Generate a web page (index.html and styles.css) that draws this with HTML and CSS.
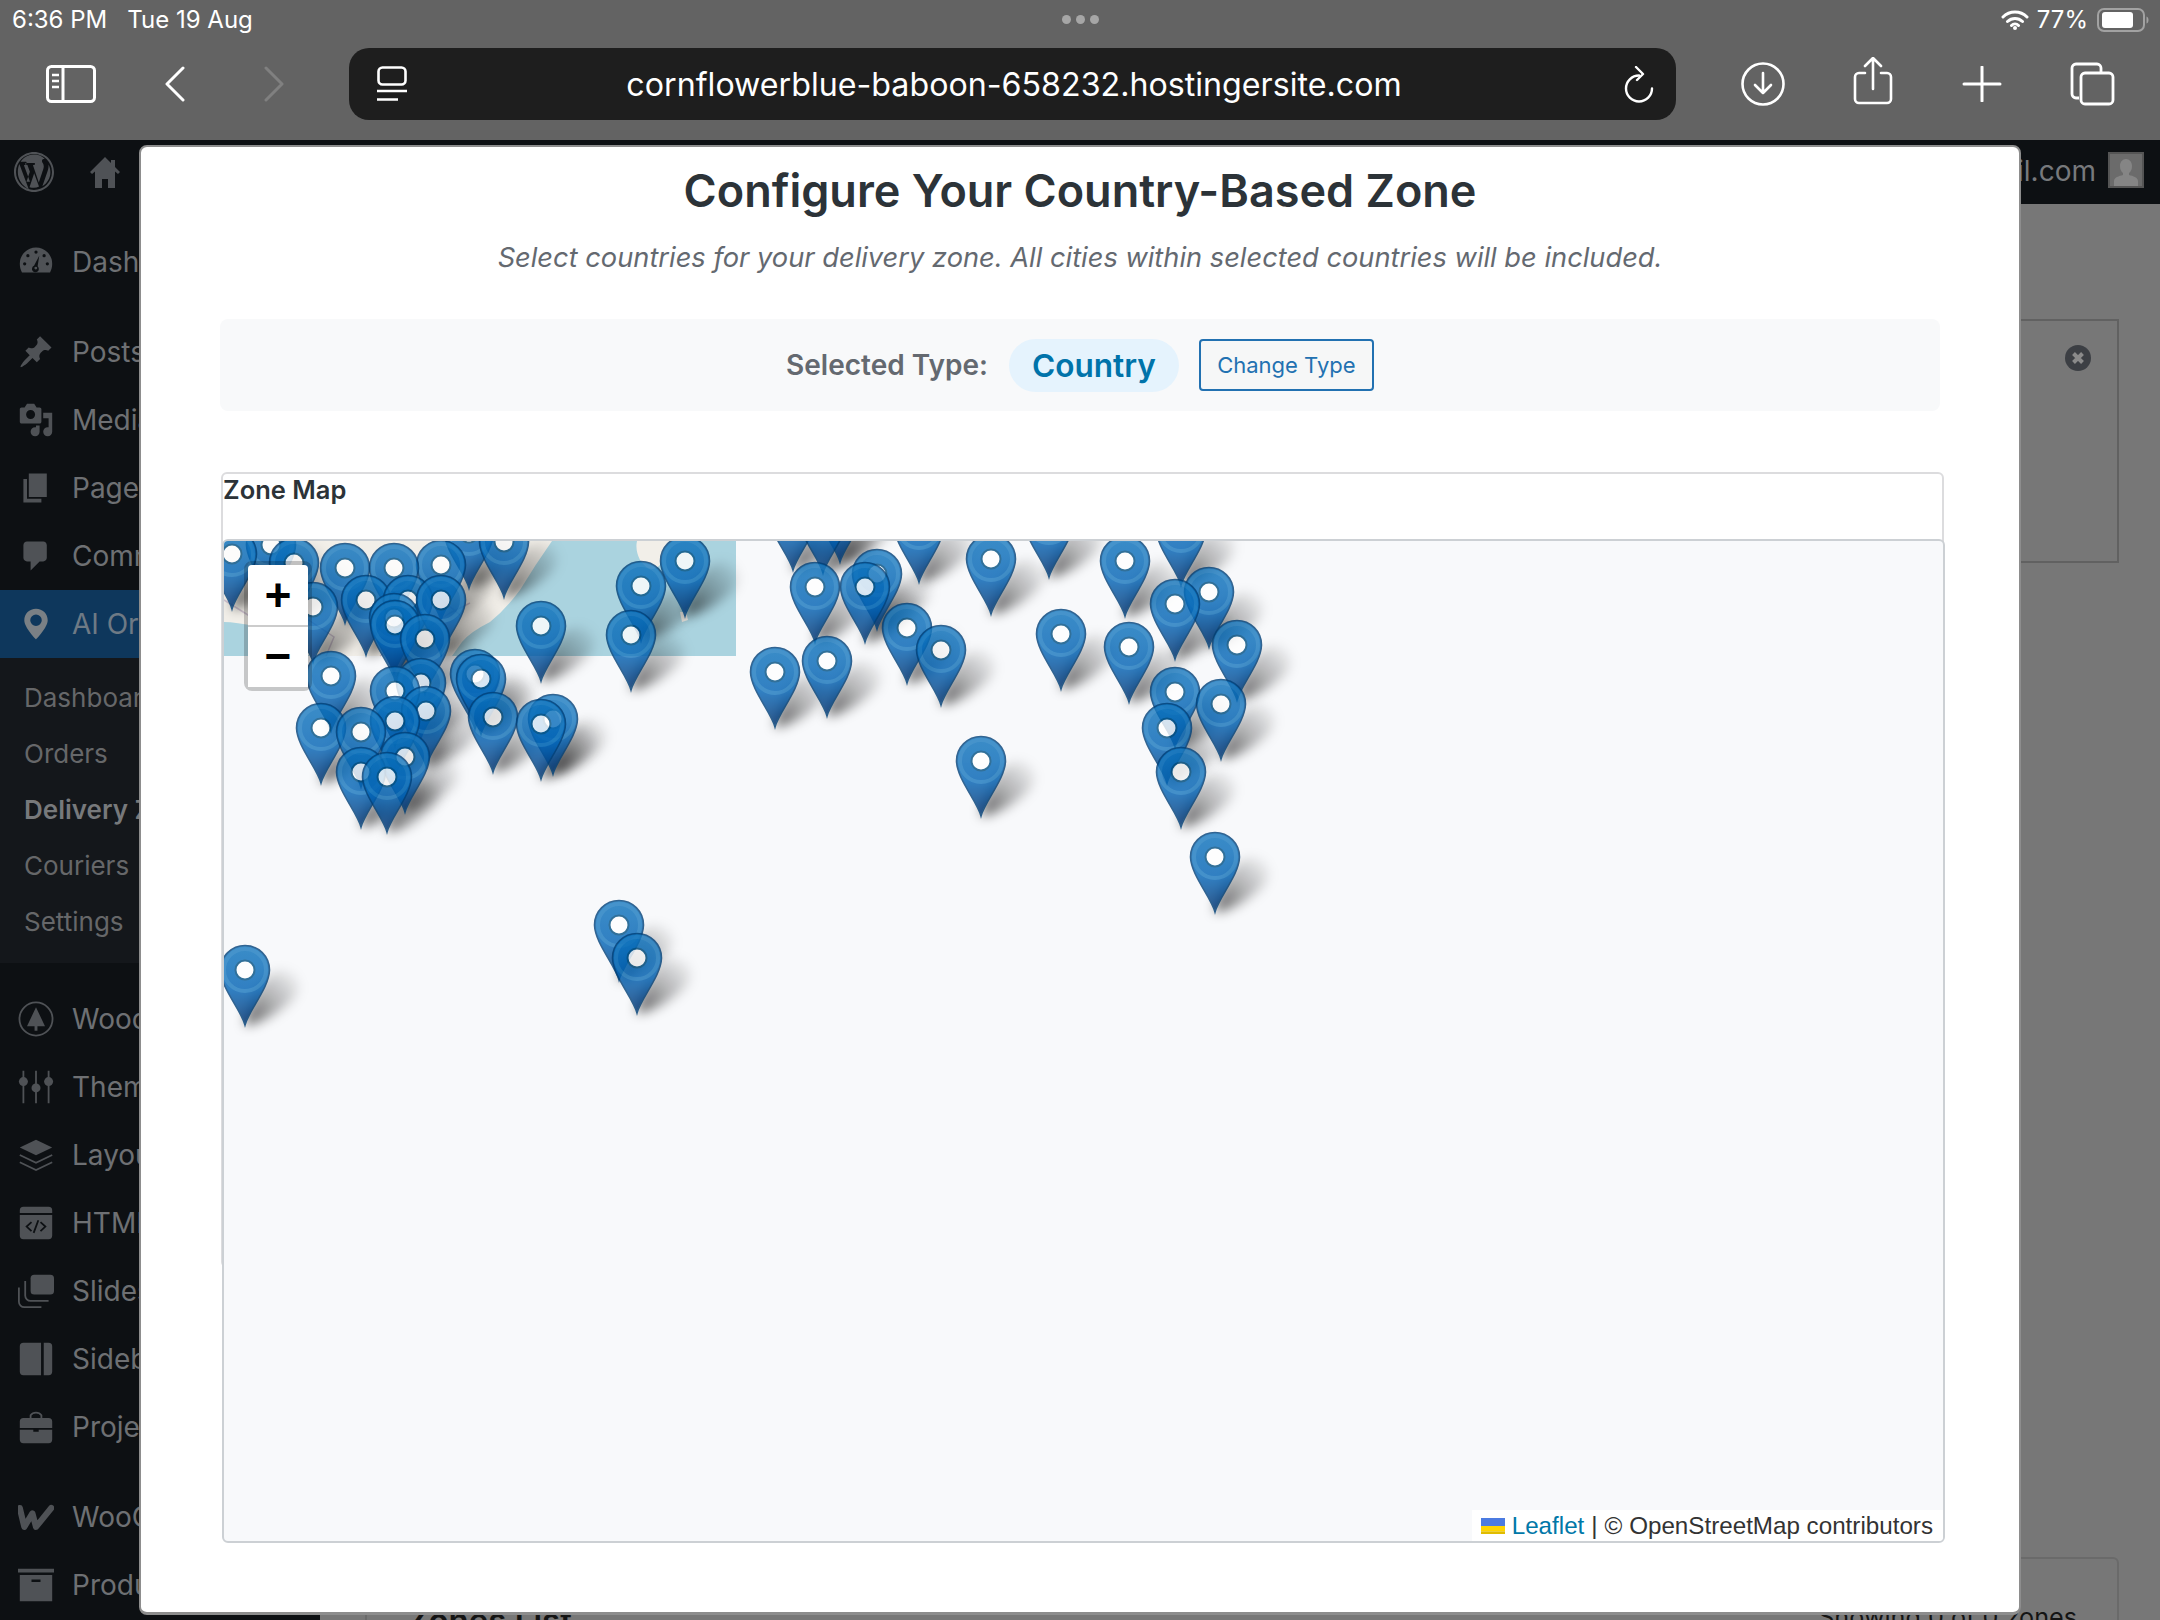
FILE: index.html
```html
<!DOCTYPE html>
<html lang="en">
<head>
<meta charset="utf-8">
<title>Configure Your Country-Based Zone</title>
<link rel="stylesheet" href="styles.css">
</head>
<body>
<div class="ios">
  <div class="status">
    <div class="status-left"><span class="clock">6:36 PM</span><span class="date">Tue 19 Aug</span></div>
    <div class="dots"><i></i><i></i><i></i></div>
    <div class="status-right">
      <svg class="wifi" width="28" height="21" viewBox="0 0 28 21"><path d="M2 8a17 17 0 0 1 24 0M6.5 12.5a11 11 0 0 1 15 0M10.5 16.5a5 5 0 0 1 7 0" fill="none" stroke="#fff" stroke-width="3" stroke-linecap="round"/><circle cx="14" cy="19" r="2" fill="#fff"/></svg>
      <span class="pct">77%</span>
      <svg class="batt" width="52" height="24" viewBox="0 0 52 24"><rect x="1" y="1" width="46" height="22" rx="6" fill="none" stroke="#a2a2a2" stroke-width="2"/><rect x="5" y="4" width="31" height="16" rx="3" fill="#fff"/><path d="M49.500 8.500c1.500.5 2 2 2 3.500s-.5 3-2 3.500z" fill="#a2a2a2"/></svg>
    </div>
  </div>
  <div class="toolbar">
    <svg class="tb-side" width="50" height="38" viewBox="0 0 50 38" fill="none" stroke="#fff" stroke-width="3"><rect x="1.500" y="1.500" width="47" height="35" rx="4"/><path d="M17 2v34"/><path d="M6 10h7M6 16h7M6 22h7" stroke-width="2.500"/></svg>
    <svg class="tb-back" width="20" height="36" viewBox="0 0 20 36" fill="none" stroke="#fff" stroke-width="3" stroke-linecap="round" stroke-linejoin="round"><path d="M18 2 2 18l16 16"/></svg>
    <svg class="tb-fwd" width="20" height="36" viewBox="0 0 20 36" fill="none" stroke="#808080" stroke-width="3" stroke-linecap="round" stroke-linejoin="round"><path d="m2 2 16 16L2 34"/></svg>
    <div class="address">
      <svg width="30" height="36" viewBox="0 0 30 36" fill="none" stroke="#fff" stroke-width="2.600"><rect x="1.500" y="1.500" width="27" height="17" rx="4"/><path d="M0 25h30M0 33.500h21"/></svg>
      <span class="url">cornflowerblue-baboon-658232.hostingersite.com</span>
      <svg width="30" height="37" viewBox="0 0 30 37" fill="none" stroke="#fff" stroke-width="2.400" stroke-linecap="round" stroke-linejoin="round"><path d="M15 9.500A13 13 0 1 0 28 22.500"/><path d="m12 1 7 7-6 6"/></svg>
    </div>
    <div class="tb-right">
      <svg width="44" height="44" viewBox="0 0 44 44" fill="none" stroke="#fff" stroke-width="2.600" stroke-linecap="round" stroke-linejoin="round"><circle cx="22" cy="22" r="20.500"/><path d="M22 11v20M14 23l8 8 8-8"/></svg>
      <svg class="share" width="44" height="48" viewBox="0 0 44 48" fill="none" stroke="#fff" stroke-width="2.600" stroke-linecap="round" stroke-linejoin="round"><path d="M14 16H8a4 4 0 0 0-4 4v22a4 4 0 0 0 4 4h28a4 4 0 0 0 4-4V20a4 4 0 0 0-4-4h-6M22 32V2M14 9l8-8 8 8"/></svg>
      <svg width="44" height="36" viewBox="0 0 44 36" fill="none" stroke="#fff" stroke-width="3" stroke-linecap="round"><path d="M22 1v34M4 18h36"/></svg>
      <svg width="45" height="44" viewBox="0 0 45 44" fill="none" stroke="#fff" stroke-width="2.800"><path d="M9 36H6a4 4 0 0 1-4-4V6a4 4 0 0 1 4-4h21a4 4 0 0 1 4 4v4"/><rect x="11" y="11" width="32" height="31" rx="4"/></svg>
    </div>
  </div>
</div>

<div class="wp">
  <header class="adminbar">
    <svg class="ab-logo" width="40" height="40" viewBox="0 0 20 20"><path fill="#4f5256" d="M20 10c0-5.520-4.480-10-10-10S0 4.480 0 10s4.480 10 10 10 10-4.480 10-10zM10 1.010c4.970 0 8.990 4.020 8.990 8.990s-4.020 8.990-8.990 8.990S1.010 14.970 1.010 10 5.030 1.010 10 1.010zM8.010 14.820 4.960 6.610c.49-.03 1.050-.08 1.050-.8.430-.05.380-1.010-.06-.99 0 0-1.290.1-2.130.1-.15 0-.33 0-.52-.01 1.440-2.170 3.900-3.600 6.700-3.600 2.090 0 3.990.79 5.410 2.090-.6-.1-1.450.35-1.450 1.080 0 .45.27.83.55 1.280.22.380.38.83.38 1.490 0 .9-.8 3.030-.8 3.030l-1.680 4.920-2.920-8.630c.49-.03.74-.14.74-.14.43-.05.38-1.010-.05-.99 0 0-1.300.1-2.140.1-.78 0-2.090-.1-2.090-.1-.43-.03-.48.96-.05.99 0 0 .4.04.82.06l1.210 3.350-1.700 5.090zm6.170 2.300 2.470-7.170c.46-1.150.62-2.070.62-2.890 0-.3-.02-.57-.06-.83.63 1.150 1 2.490 1 3.880 0 2.950-1.600 5.530-4.030 7.010zM2.680 6.030l4.660 12.470C4.110 16.930 1.900 13.710 1.900 10c0-1.430.31-2.780.78-3.970zM10 17.900c-.78 0-1.540-.12-2.250-.33l2.340-6.950 2.400 6.580c.02.04.03.08.06.11-.79.38-1.670.59-2.550.59z"/></svg>
    <svg class="ab-home" width="30" height="32" viewBox="0 0 30 32"><path fill="#4f5256" d="M15 0 0 15l2 2 3-2.500V31h7v-9h6v9h7V14.500L28 17l2-2-5-5V3h-4v3z"/></svg>
    <span class="ab-user">admin@gmail.com</span>
    <span class="avatar"><svg width="32" height="32" viewBox="0 0 32 32"><path fill="#858585" d="M16 5c3.500 0 6 3 6 7 0 3-1 5.500-3 7v2c4 1 9 2.500 9 6v5H4v-5c0-3.500 5-5 9-6v-2c-2-1.500-3-4-3-7 0-4 2.500-7 6-7z"/></svg></span>
  </header>
  <div class="wp-body">
    <nav class="sidebar">
      <ul class="menu first">
        <li><svg viewBox="0 0 20 20"><path d="M10 2a9 9 0 0 0-9 9c0 1.700.4 3.300 1.200 4.800h15.600c.8-1.500 1.200-3.100 1.200-4.800a9 9 0 0 0-9-9z"/><g fill="#0d1013"><circle cx="10" cy="4.500" r=".9"/><circle cx="5.500" cy="6.500" r=".9"/><circle cx="14.500" cy="6.500" r=".9"/><circle cx="3.700" cy="11" r=".9"/><circle cx="16.300" cy="11" r=".9"/><path d="m11.800 6.500-.9 5.900a1.900 1.900 0 1 1-2 -.3z"/></g><circle cx="9.900" cy="13.400" r=".8"/></svg><span>Dashboard</span></li>
      </ul>
      <ul class="menu second">
        <li><svg viewBox="0 0 20 20"><path d="m10.440 3.020 1.820-1.820 6.360 6.350-1.830 1.820c-1.050-.68-2.480-.57-3.410.36l-.75.75c-.92.93-1.040 2.350-.35 3.410l-1.830 1.820-2.410-2.410-2.800 2.790c-.42.42-3.380 2.710-3.800 2.290s1.860-3.390 2.280-3.810l2.790-2.790L4.100 9.360l1.830-1.820c1.050.69 2.480.57 3.400-.36l.75-.75c.93-.92 1.050-2.350.36-3.410z"/></svg><span>Posts</span></li>
        <li><svg viewBox="0 0 20 20"><path fill-rule="evenodd" d="M13 11V4c0-.55-.45-1-1-1h-1.670L9 1H5L3.670 3H2c-.55 0-1 .45-1 1v7c0 .55.45 1 1 1h10c.55 0 1-.45 1-1zM7 4.500c1.380 0 2.500 1.120 2.500 2.500S8.380 9.500 7 9.500 4.500 8.380 4.500 7 5.620 4.500 7 4.500zM14 6h5v10.500c0 1.380-1.120 2.500-2.500 2.500S14 17.880 14 16.500s1.120-2.500 2.500-2.500c.17 0 .34.02.5.05V9h-3V6zm-4 8.050V13h2v3.500c0 1.380-1.120 2.500-2.500 2.500S7 17.880 7 16.500 8.120 14 9.500 14c.17 0 .34.02.5.05z"/></svg><span>Media</span></li>
        <li><svg viewBox="0 0 20 20"><path d="M6 15V2h10v13H6zm-1 1h8v2H3V5h2v11z"/></svg><span>Pages</span></li>
        <li><svg viewBox="0 0 20 20"><path d="M5 2h9c1.100 0 2 .9 2 2v7c0 1.100-.9 2-2 2h-2l-5 5v-5H5c-1.100 0-2-.9-2-2V4c0-1.100.9-2 2-2z"/></svg><span>Comments</span></li>
        <li class="active"><svg viewBox="0 0 20 20"><path fill-rule="evenodd" d="M10 1.500c-3.700 0-6.500 2.800-6.500 6.400C3.500 12 10 18.500 10 18.500S16.500 12 16.500 7.900c0-3.600-2.800-6.400-6.500-6.400zm0 3.200a3.200 3.200 0 1 1 0 6.400 3.200 3.200 0 0 1 0-6.400z"/></svg><span>AI Orders</span></li>
      </ul>
      <ul class="submenu">
        <li>Dashboard</li>
        <li>Orders</li>
        <li class="current">Delivery Zones</li>
        <li>Couriers</li>
        <li>Settings</li>
      </ul>
      <ul class="menu third">
        <li><svg viewBox="0 0 20 20"><circle cx="10" cy="10" r="9.200" fill="none" stroke="#4f5256" stroke-width="1"/><path d="M10 3.500 15 14h-4.200v2.500H9.200V14H5z"/></svg><span>Woodmart</span></li>
        <li><svg viewBox="0 0 20 20"><g fill="none" stroke="#4f5256" stroke-width="1"><path d="M3 1v18M10 1v18M17 1v18"/></g><circle cx="3" cy="7" r="2.500"/><circle cx="10" cy="10.500" r="2.500"/><circle cx="17" cy="7" r="2.500"/></svg><span>Theme</span></li>
        <li><svg viewBox="0 0 20 20"><path d="m10 1.500 9 4.300-9 4.300-9-4.300z"/><path d="m1 10 9 4.300 9-4.300M1 14l9 4.300 9-4.300" fill="none" stroke="#4f5256" stroke-width="1"/></svg><span>Layouts</span></li>
        <li><svg viewBox="0 0 20 20"><path d="M3 1h14a2 2 0 0 1 2 2v1.500H1V3a2 2 0 0 1 2-2zM1 5.500h18V17a2 2 0 0 1-2 2H3a2 2 0 0 1-2-2z"/><path d="M7.500 9.500 4.800 12l2.700 2.500M12.500 9.500l2.700 2.500-2.700 2.500M11.300 8.500l-2.600 7" fill="none" stroke="#0d1013" stroke-width="1"/></svg><span>HTML Blocks</span></li>
        <li><svg viewBox="0 0 20 20"><rect x="7" y="1" width="13" height="11" rx="2"/><path d="M4 4.500v8a3 3 0 0 0 3 3h10M.5 8v8a3 3 0 0 0 3 3H13" fill="none" stroke="#4f5256" stroke-width="1"/></svg><span>Slides</span></li>
        <li><svg viewBox="0 0 20 20"><path d="M3 1h9.800v18H3a2 2 0 0 1-2-2V3a2 2 0 0 1 2-2zM14.300 1H17a2 2 0 0 1 2 2v14a2 2 0 0 1-2 2h-2.700z"/></svg><span>Sidebars</span></li>
        <li><svg viewBox="0 0 20 20"><path d="M7 5V3.500A3.500 3 0 0 1 13 3.500V5" fill="none" stroke="#4f5256" stroke-width="1"/><path d="M3 5h14a2 2 0 0 1 2 2v3.500H1V7a2 2 0 0 1 2-2zM1 11.500h7.500v1.200h3v-1.200H19V17a2 2 0 0 1-2 2H3a2 2 0 0 1-2-2z"/></svg><span>Projects</span></li>
      </ul>
      <ul class="menu fourth">
        <li><svg viewBox="0 0 20 20"><path d="M1 5 3.500 15.500 8 8l2 7.500L18.500 5" fill="none" stroke="#4f5256" stroke-width="3.400" stroke-linejoin="round" stroke-linecap="round"/></svg><span>WooCommerce</span></li>
        <li><svg viewBox="0 0 20 20"><path fill-rule="evenodd" d="M0 1h20v2H0zM1 4.500h18V19H1zM7.500 7v1.400h5V7z"/></svg><span>Products</span></li>
      </ul>
    </nav>
    <main class="main">
      <section class="notice">
        <svg width="26" height="26" viewBox="0 0 26 26"><circle cx="13" cy="13" r="13" fill="#3c3f44"/><path d="m8.500 8.500 9 9m0-9-9 9" stroke="#8a8a8a" stroke-width="4"/></svg>
      </section>
      <section class="zones-card">
        <h2>Zones List</h2>
        <span>Showing 0 of 0 zones</span>
      </section>
    </main>
  </div>
</div>

<div class="modal">
  <h1>Configure Your Country-Based Zone</h1>
  <p class="sub">Select countries for your delivery zone. All cities within selected countries will be included.</p>
  <div class="type-panel">
    <span class="type-label">Selected Type:</span>
    <span class="type-pill">Country</span>
    <button class="type-btn">Change Type</button>
  </div>
  <div class="zone-box">
    <div class="zone-label">Zone Map</div>
    <div class="map">
      <svg class="map-canvas" viewBox="224 541 1719 998" width="1719" height="998">
        <defs>
          <linearGradient id="pinfill" x1="0" y1="0" x2="0" y2="1">
            <stop offset="0" stop-color="#0b72bc"/>
            <stop offset=".55" stop-color="#0062b5"/>
            <stop offset="1" stop-color="#00316f"/>
          </linearGradient>
          <linearGradient id="shadefill" x1="0" y1="1" x2="1" y2="0">
            <stop offset="0" stop-color="#000" stop-opacity=".65"/>
            <stop offset=".45" stop-color="#000" stop-opacity=".3"/>
            <stop offset="1" stop-color="#000" stop-opacity="0"/>
          </linearGradient>
          <filter id="blur" x="-40%" y="-40%" width="180%" height="180%"><feGaussianBlur stdDeviation="6"/></filter>
          <g id="pin">
            <path d="M0 0C-4-15-24-37-24.500-55A24.500 24.500 0 0 1 24.500-55C24-37 4-15 0 0Z" fill="url(#pinfill)" stroke="#004078" stroke-width="1.600"/>
            <circle cy="-55" r="21" fill="none" stroke="#1e7dc2" stroke-width="4" opacity=".8"/>
            <circle cy="-55" r="9.500" fill="#fff" stroke="#004f82" stroke-width="2"/>
          </g>
          <path id="shade" d="M0 0C2-20 16-50 34-54 52-56 60-40 48-26 32-10 10 0 0 0Z" fill="url(#shadefill)" filter="url(#blur)"/>
        </defs>
        <rect class="tile-sea" x="224" y="541" width="512" height="115"/>
        <path class="tile-land" d="M224 541H552Q535 565 520 590 505 610 490 622 470 632 462 642L452 656H310Q290 640 270 630 240 622 224 622ZM637 541H672Q662 548 660 565 650 575 640 560 635 550 637 541ZM680 612l6 0 2 8-6 2z"/>
        <path class="tile-border" d="M224 600l40 25 40 -8 30 20 -8 19M470 603l-20 10-30 20-20 8-20 15M430 590l30 25"/>
        <g class="shades">
          <use href="#shade" x="840" y="562"/><use href="#shade" x="793" y="570"/><use href="#shade" x="823" y="573"/><use href="#shade" x="1049" y="577"/><use href="#shade" x="919" y="582"/><use href="#shade" x="1181" y="585"/><use href="#shade" x="469" y="588"/><use href="#shade" x="504" y="597"/><use href="#shade" x="271" y="600"/><use href="#shade" x="232" y="609"/><use href="#shade" x="991" y="614"/><use href="#shade" x="685" y="616"/><use href="#shade" x="1125" y="616"/><use href="#shade" x="294" y="618"/><use href="#shade" x="441" y="620"/><use href="#shade" x="345" y="623"/><use href="#shade" x="394" y="623"/><use href="#shade" x="877" y="629"/><use href="#shade" x="641" y="641"/><use href="#shade" x="815" y="642"/><use href="#shade" x="865" y="642"/><use href="#shade" x="1209" y="647"/><use href="#shade" x="366" y="655"/><use href="#shade" x="408" y="655"/><use href="#shade" x="441" y="655"/><use href="#shade" x="1175" y="659"/><use href="#shade" x="313" y="662"/><use href="#shade" x="394" y="673"/><use href="#shade" x="395" y="680"/><use href="#shade" x="541" y="681"/><use href="#shade" x="907" y="683"/><use href="#shade" x="1061" y="689"/><use href="#shade" x="631" y="690"/><use href="#shade" x="425" y="694"/><use href="#shade" x="1237" y="700"/><use href="#shade" x="1129" y="702"/><use href="#shade" x="941" y="705"/><use href="#shade" x="827" y="716"/><use href="#shade" x="775" y="727"/><use href="#shade" x="475" y="729"/><use href="#shade" x="331" y="731"/><use href="#shade" x="481" y="734"/><use href="#shade" x="421" y="738"/><use href="#shade" x="395" y="746"/><use href="#shade" x="1175" y="747"/><use href="#shade" x="1221" y="759"/><use href="#shade" x="426" y="766"/><use href="#shade" x="493" y="772"/><use href="#shade" x="553" y="774"/><use href="#shade" x="395" y="776"/><use href="#shade" x="541" y="779"/><use href="#shade" x="321" y="783"/><use href="#shade" x="1167" y="783"/><use href="#shade" x="361" y="787"/><use href="#shade" x="405" y="812"/><use href="#shade" x="981" y="816"/><use href="#shade" x="361" y="827"/><use href="#shade" x="1181" y="827"/><use href="#shade" x="387" y="832"/><use href="#shade" x="1215" y="912"/><use href="#shade" x="619" y="980"/><use href="#shade" x="637" y="1013"/><use href="#shade" x="245" y="1025"/>
        </g>
        <g class="pins">
          <use href="#pin" x="840" y="562"/><use href="#pin" x="793" y="570"/><use href="#pin" x="823" y="573"/><use href="#pin" x="1049" y="577"/><use href="#pin" x="919" y="582"/><use href="#pin" x="1181" y="585"/><use href="#pin" x="469" y="588"/><use href="#pin" x="504" y="597"/><use href="#pin" x="271" y="600"/><use href="#pin" x="232" y="609"/><use href="#pin" x="991" y="614"/><use href="#pin" x="685" y="616"/><use href="#pin" x="1125" y="616"/><use href="#pin" x="294" y="618"/><use href="#pin" x="441" y="620"/><use href="#pin" x="345" y="623"/><use href="#pin" x="394" y="623"/><use href="#pin" x="877" y="629"/><use href="#pin" x="641" y="641"/><use href="#pin" x="815" y="642"/><use href="#pin" x="865" y="642"/><use href="#pin" x="1209" y="647"/><use href="#pin" x="366" y="655"/><use href="#pin" x="408" y="655"/><use href="#pin" x="441" y="655"/><use href="#pin" x="1175" y="659"/><use href="#pin" x="313" y="662"/><use href="#pin" x="394" y="673"/><use href="#pin" x="395" y="680"/><use href="#pin" x="541" y="681"/><use href="#pin" x="907" y="683"/><use href="#pin" x="1061" y="689"/><use href="#pin" x="631" y="690"/><use href="#pin" x="425" y="694"/><use href="#pin" x="1237" y="700"/><use href="#pin" x="1129" y="702"/><use href="#pin" x="941" y="705"/><use href="#pin" x="827" y="716"/><use href="#pin" x="775" y="727"/><use href="#pin" x="475" y="729"/><use href="#pin" x="331" y="731"/><use href="#pin" x="481" y="734"/><use href="#pin" x="421" y="738"/><use href="#pin" x="395" y="746"/><use href="#pin" x="1175" y="747"/><use href="#pin" x="1221" y="759"/><use href="#pin" x="426" y="766"/><use href="#pin" x="493" y="772"/><use href="#pin" x="553" y="774"/><use href="#pin" x="395" y="776"/><use href="#pin" x="541" y="779"/><use href="#pin" x="321" y="783"/><use href="#pin" x="1167" y="783"/><use href="#pin" x="361" y="787"/><use href="#pin" x="405" y="812"/><use href="#pin" x="981" y="816"/><use href="#pin" x="361" y="827"/><use href="#pin" x="1181" y="827"/><use href="#pin" x="387" y="832"/><use href="#pin" x="1215" y="912"/><use href="#pin" x="619" y="980"/><use href="#pin" x="637" y="1013"/><use href="#pin" x="245" y="1025"/>
        </g>
      </svg>
      <div class="zoom-ctl">
        <a class="zoom-btn zoom-in">+</a>
        <a class="zoom-btn zoom-out">&#8722;</a>
      </div>
      <div class="attribution">
        <svg width="24" height="16" viewBox="0 0 12 8"><rect width="12" height="4" fill="#4c7be1"/><rect y="4" width="12" height="2.700" fill="#ffd500"/><rect y="6.700" width="12" height="1.300" fill="#e0bc00"/></svg>
        <a>Leaflet</a><span class="sep">|</span><span>© OpenStreetMap contributors</span>
      </div>
    </div>
  </div>
</div>
</body>
</html>
```
FILE: styles.css
```css
* { box-sizing: border-box; }
html, body { margin: 0; padding: 0; }
body {
  width: 2160px;
  height: 1620px;
  overflow: hidden;
  position: relative;
  font-family: Inter, "Liberation Sans", sans-serif;
  background: #777;
}
ul { list-style: none; margin: 0; padding: 0; }

/* iOS chrome */
.ios { height: 140px; background: #636363; color: #fff; }
.status {
  height: 48px;
  display: grid;
  grid-template-columns: 1fr auto 1fr;
  align-items: center;
  padding: 0 11px 9px 12px;
}
.status-left { font-size: 24px; display: flex; gap: 20px; }
.dots { display: flex; gap: 5px; }
.dots i { width: 9px; height: 9px; border-radius: 50%; background: #a6a6a6; }
.status-right { display: flex; align-items: center; justify-content: flex-end; }
.wifi { margin-right: 8px; }
.pct { font-size: 24px; margin-right: 9px; }
.toolbar { height: 92px; display: flex; align-items: center; padding: 0 0 20px 46px; }
.tb-back { margin-left: 69px; }
.tb-fwd { margin-left: 79px; }
.address {
  margin-left: 65px;
  width: 1327px;
  height: 72px;
  background: #1e1e1e;
  border-radius: 20px;
  display: flex;
  align-items: center;
  justify-content: space-between;
  padding: 0 22px 0 28px;
}
.url { font-size: 32.200px; color: #fff; padding-top: 1px; margin-right: 3px; }
.tb-right { margin-left: 65px; display: flex; gap: 65.500px; align-items: center; }
.share { margin-top: -6px; }

/* WordPress behind */
.wp { height: 1480px; display: flex; flex-direction: column; }
.adminbar {
  height: 64px;
  flex: none;
  background: #0d1013;
  display: flex;
  align-items: flex-start;
  padding: 12px 16px 0 14px;
  color: #77797c;
  font-size: 28px;
}
.ab-home { margin: 5px 0 0 36px; }
.ab-user { margin-left: auto; margin-right: 12px; line-height: 38px; }
.avatar { width: 36px; height: 36px; background: #6b6b6b; border: 2px solid #555; display: block; }
.avatar svg { display: block; }
.wp-body { flex: 1; display: flex; min-height: 0; }
.sidebar { width: 320px; flex: none; background: #0d1013; color: #6e7073; font-size: 28px; padding-top: 24px; }
.menu li { height: 68px; display: flex; align-items: center; white-space: nowrap; }
.menu svg { width: 36px; height: 36px; margin: 0 18px; flex: none; fill: #4f5256; }
.second { margin-top: 22px; }
.third { margin-top: 22px; }
.fourth { margin-top: 22px; }
.menu li.active { background: #0e375c; color: #6e7a85; }
.menu li.active svg { fill: #7a8085; }
.submenu { background: #14171b; padding: 12px 0 13px; font-size: 26px; color: #666769; }
.submenu li { height: 56px; line-height: 56px; padding-left: 24px; white-space: nowrap; }
.submenu .current { font-weight: 600; color: #77797b; }
.main { flex: 1; padding: 115px 41px 0 45px; min-width: 0; }
.notice {
  height: 244px;
  border: 2px solid #616161;
  display: flex;
  justify-content: flex-end;
  padding: 24px 26px 0 0;
}
.zones-card {
  margin-top: 994px;
  border: 2px solid #6a6a6a;
  border-radius: 6px;
  height: 140px;
  display: flex;
  justify-content: space-between;
  align-items: flex-start;
  padding: 38px 40px 0 40px;
  color: #141414;
}
.zones-card h2 { margin: 0; font-size: 33px; font-weight: 600; line-height: 46px; }
.zones-card span { font-size: 25.200px; line-height: 40px; }

/* Modal */
.modal {
  position: absolute;
  left: 139px;
  top: 145px;
  width: 1882px;
  height: 1470px;
  background: #fff;
  border: 2px solid #8d8d8d;
  border-bottom-width: 3px;
  border-radius: 8px;
  padding: 16px 79px 0;
}
h1 {
  margin: 0;
  text-align: center;
  font-size: 45px;
  line-height: 56px;
  font-weight: 600;
  color: #2c3338;
}
.sub {
  margin: 19px 0 0;
  text-align: center;
  font-size: 27.250px;
  line-height: 40px;
  font-style: italic;
  color: #646970;
}
.type-panel {
  margin-top: 41px;
  width: 1720px;
  height: 92px;
  background: #f8f9fa;
  border-radius: 8px;
  display: flex;
  align-items: center;
  justify-content: center;
  font-size: 28px;
}
.type-label { font-weight: 600; color: #646970; }
.type-pill {
  margin-left: 21px;
  height: 53px;
  line-height: 53px;
  padding: 0 23px;
  border-radius: 27px;
  background: #e5f3fd;
  color: #0073aa;
  font-size: 31.600px;
  font-weight: 600;
}
.type-btn {
  margin-left: 20px;
  width: 175px;
  height: 52px;
  background: #f6f7f7;
  border: 2px solid #2271b1;
  border-radius: 4px;
  color: #2271b1;
  font-family: inherit;
  font-size: 22px;
  padding: 0;
}
.zone-box {
  margin-top: 61px;
  margin-left: 1px;
  width: 1723px;
  height: 796px;
  border: 2px solid #dcdcde;
  border-radius: 6px;
}
.zone-label {
  height: 65px;
  padding-top: 1px;
  font-size: 25.500px;
  font-weight: 600;
  line-height: 30px;
  color: #2c3338;
}
.map {
  position: relative;
  margin-left: -1px;
  width: 1723px;
  height: 1004px;
  background: #f8f9fb;
  border: 2px solid #ccd0d4;
  border-radius: 6px;
  overflow: hidden;
}
.map-canvas { position: absolute; left: 0; top: 0; display: block; }
.tile-sea { fill: #aad3df; }
.tile-land { fill: #f2efe9; }
.tile-border { fill: none; stroke: #cfc3d0; stroke-width: 1.500; }
.pins use { opacity: .8; }
.zoom-ctl {
  position: absolute;
  left: 20px;
  top: 20px;
  width: 68px;
  border: 4px solid rgba(0, 0, 0, .2);
  border-radius: 8px;
  background-clip: padding-box;
}
.zoom-btn {
  display: block;
  height: 60px;
  background: #fff;
  color: #000;
  font: 700 46px/67px "Liberation Mono", monospace;
  text-align: center;
  overflow: hidden;
}
.zoom-in { border-radius: 4px 4px 0 0; border-bottom: 2px solid #ccc; height: 62px; line-height: 68px; }
.attribution {
  position: absolute;
  right: 0;
  bottom: 0;
  height: 31px;
  padding: 0 10px 0 9px;
  background: #fff;
  display: flex;
  align-items: center;
  font: 24.200px/31px "Liberation Sans", sans-serif;
  color: #333;
}
.attribution a { color: #0078a8; margin-left: 7px; }
.attribution .sep { margin: 0 7px; }
```
